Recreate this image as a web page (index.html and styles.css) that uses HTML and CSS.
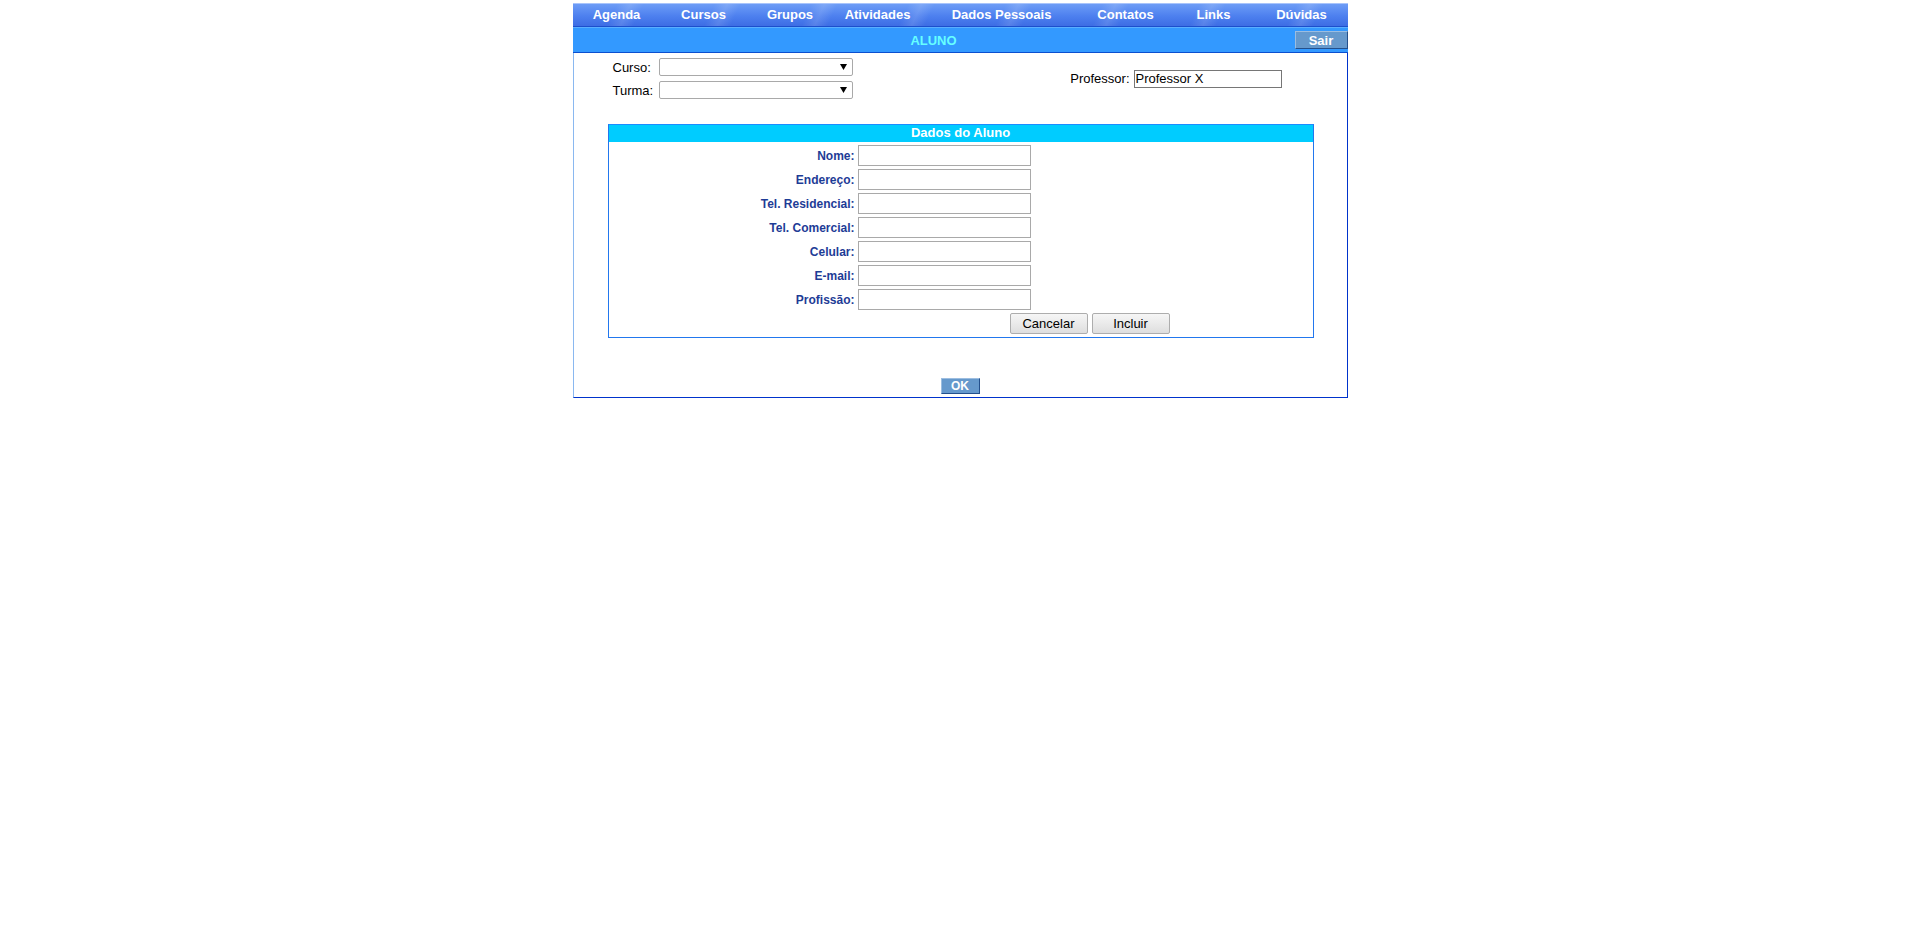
FILE: index.html
```html
<!DOCTYPE html>
<html lang="pt-BR">
  <head>
    <meta charset="UTF-8" />
    <title>Aluno</title>
    <link rel="stylesheet" href="styles.css">
  </head>
  <body>
    <div class="page">
      <div class="menu">
        <a href="#">Agenda</a>
        <a href="#">Cursos</a>
        <a href="#">Grupos</a>
        <a href="#">Atividades</a>
        <a href="#">Dados Pessoais</a>
        <a href="#">Contatos</a>
        <a href="#">Links</a>
        <a href="#">Dúvidas</a>
      </div>
      <div class="titulo">
        <span class="titulo-texto">ALUNO</span>
        <button class="btn-azul btn-sair">Sair</button>
      </div>

      <div class="conteudo">
        <div class="filtros">
          <div class="selecoes">
            <div class="linha">
              <label>Curso:</label>
              <span class="combo">
                <select></select>
                <svg class="seta" width="7" height="6" viewBox="0 0 7 6"><path d="M0 0H7L3.5 6Z" fill="#000"/></svg>
              </span>
            </div>
            <div class="linha">
              <label>Turma:</label>
              <span class="combo">
                <select></select>
                <svg class="seta" width="7" height="6" viewBox="0 0 7 6"><path d="M0 0H7L3.5 6Z" fill="#000"/></svg>
              </span>
            </div>
          </div>
          <div class="professor">
            <label>Professor:</label>
            <input type="text" value="Professor X" class="campo-prof" />
          </div>
        </div>

        <div class="caixa">
          <div class="caixa-titulo">Dados do Aluno</div>
          <div class="campos">
            <label>Nome:</label><input type="text" />
            <label>Endereço:</label><input type="text" />
            <label>Tel. Residencial:</label><input type="text" />
            <label>Tel. Comercial:</label><input type="text" />
            <label>Celular:</label><input type="text" />
            <label>E-mail:</label><input type="text" />
            <label>Profissão:</label><input type="text" />
          </div>
          <div class="acoes">
            <button class="btn-cinza">Cancelar</button>
            <button class="btn-cinza">Incluir</button>
          </div>
        </div>

        <div class="rodape">
          <button class="btn-azul btn-ok">OK</button>
        </div>
      </div>
    </div>
  </body>
</html>
```

FILE: styles.css
```css
body {
    margin: 0;
    font-family: "Liberation Sans", Arial, sans-serif;
    font-size: 13px;
    background-color: #fff;
    color: #000;
}
.page {
    width: 775px;
    margin: 3px auto 0;
}
.menu {
    display: grid;
    grid-template-columns: 88px 86px 87px 88px 160px 88px 88px 88px;
    height: 22px;
    border-top: 1px solid #a9c4fb;
    border-bottom: 1px solid #1c4fcc;
    background:
        repeating-linear-gradient(115deg, rgba(255,255,255,0) 0px, rgba(255,255,255,0) 40px, rgba(255,255,255,0.13) 52px, rgba(255,255,255,0) 64px, rgba(255,255,255,0) 88px),
        linear-gradient(#6d9cf6, #4d80ef 55%, #3d6de4);
}
.menu a {
    color: #fff;
    font-weight: bold;
    text-decoration: none;
    text-align: center;
    line-height: 22px;
}
.titulo {
    display: flex;
    align-items: center;
    height: 24px;
    background-color: #3399ff;
    border-top: 1px solid #5aaeff;
    border-bottom: 1px solid #0b4fcf;
}
.titulo-texto {
    flex: 1;
    text-align: center;
    color: #66ffff;
    font-weight: bold;
}
.btn-azul {
    font-family: "Liberation Sans", Arial, sans-serif;
    font-size: 12px;
    font-weight: bold;
    color: #fff;
    background-color: #6699cc;
    border: 1px solid;
    border-color: #9cbde0 #24508c #24508c #9cbde0;
    padding: 0;
    cursor: pointer;
}
.btn-sair {
    width: 53px;
    height: 18px;
    font-size: 13px;
}
.conteudo {
    border-left: 1px solid #8ab8f0;
    border-right: 1px solid #0033cc;
    border-bottom: 1px solid #0033cc;
    padding: 5px 0 3px;
}
.filtros {
    display: flex;
    align-items: center;
    justify-content: space-between;
    padding: 0 65px 0 39px;
}
.selecoes {
    display: flex;
    flex-direction: column;
    gap: 5px;
}
.linha {
    display: flex;
    align-items: center;
}
.linha label {
    width: 46px;
}
.combo {
    position: relative;
    display: block;
    width: 194px;
    height: 18px;
}
.combo select {
    appearance: none;
    width: 194px;
    height: 18px;
    margin: 0;
    border: 1px solid #a9a9a9;
    border-radius: 2px;
    background-color: #fff;
}
.seta {
    position: absolute;
    right: 6px;
    top: 6px;
    pointer-events: none;
}
.professor {
    display: flex;
    align-items: center;
    gap: 4px;
}
.campo-prof {
    width: 148px;
    height: 18px;
    box-sizing: border-box;
    margin: 0;
    padding: 0 1px;
    border: 1px solid #767676;
    font-family: "Liberation Sans", Arial, sans-serif;
    font-size: 13px;
}
.caixa {
    margin: 25px 33px 0 34px;
    border: 1px solid #2277ee;
    border-top-color: #1c8cff;
    padding-bottom: 3px;
}
.caixa-titulo {
    background-color: #00ccff;
    color: #fff;
    font-weight: bold;
    text-align: center;
    height: 17px;
    line-height: 16px;
}
.campos {
    display: grid;
    grid-template-columns: 246px 173px;
    column-gap: 3px;
    row-gap: 3px;
    align-items: center;
    padding-top: 3px;
}
.campos label {
    text-align: right;
    font-size: 12px;
    font-weight: bold;
    color: #1e3c96;
}
.campos input {
    width: 173px;
    height: 21px;
    box-sizing: border-box;
    margin: 0;
    border: 1px solid #a9a9a9;
    font-family: "Liberation Sans", Arial, sans-serif;
}
.acoes {
    display: flex;
    gap: 4px;
    padding: 3px 0 0 401px;
}
.btn-cinza {
    width: 78px;
    height: 21px;
    padding: 0;
    font-family: "Liberation Sans", Arial, sans-serif;
    font-size: 13px;
    color: #000;
    background: linear-gradient(#f6f6f6, #dedede);
    border: 1px solid #adadad;
    border-radius: 2px;
}
.rodape {
    text-align: center;
    margin-top: 40px;
}
.btn-ok {
    width: 39px;
    height: 16px;
    line-height: 12px;
    vertical-align: top;
}
```
